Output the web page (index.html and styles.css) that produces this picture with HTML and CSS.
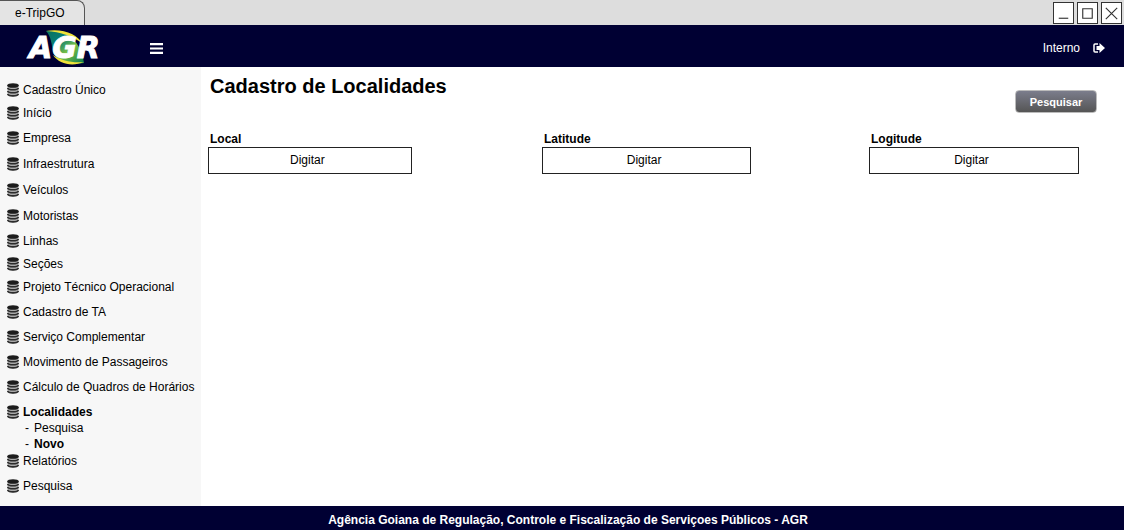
FILE: index.html
```html
<!DOCTYPE html>
<html lang="pt-BR">
<head>
<meta charset="utf-8">
<title>e-TripGO</title>
<link rel="stylesheet" href="styles.css">
</head>
<body>
<svg class="sprite" aria-hidden="true">
  <symbol id="db" viewBox="0 0 12 14">
    <path d="M.5 2.500v9c1 2.600 10 2.600 11 0v-9z" fill="#a8a8a8"/>
    <path d="M.5 5c1 2.300 10 2.300 11 0M.5 8c1 2.300 10 2.300 11 0M.5 11c1 2.600 10 2.600 11 0" fill="none" stroke="#2c2c2c" stroke-width="1.700"/>
    <ellipse cx="6" cy="2.500" rx="5.800" ry="2.300" fill="#1c1c1c"/>
  </symbol>
</svg>
<div class="window">
  <div class="titlebar">
    <div class="tab">e-TripGO</div>
    <div class="controls">
      <button class="control" aria-label="Minimizar"><svg viewBox="0 0 20 20"><path d="M5 15h10"/></svg></button>
      <button class="control" aria-label="Maximizar"><svg viewBox="0 0 20 20"><path d="M5 5h10v10H5z"/></svg></button>
      <button class="control" aria-label="Fechar"><svg viewBox="0 0 20 20"><path d="M4 4l12 12M16 4L4 16"/></svg></button>
    </div>
  </div>
  <header class="header">
    <svg class="logo" viewBox="0 0 76 38" role="img" aria-label="AGR">
      <defs>
        <linearGradient id="leaf" x1="0" y1="0" x2="1" y2="1">
          <stop offset="0" stop-color="#08705c"/><stop offset=".35" stop-color="#0a7f78"/><stop offset=".6" stop-color="#7cc242"/><stop offset="1" stop-color="#0a7a50"/>
        </linearGradient>
      </defs>
      <path d="M20 4C38 2 55 12 58 36C44 38 32 34 27 26C26 18 25 9 20 4z" fill="url(#leaf)"/>
      <path d="M20 4C37 1 51 7 57 17C47 9 35 5 20 4zM27 28C36 34 46 36 58 35C46 40 33 37 27 28z" fill="#efe23a"/>
      <text class="logo-text" x="3" y="31">AGR</text>
    </svg>
    <button class="menu" aria-label="Menu"><svg viewBox="0 0 12 10"><path d="M0 1h12M0 5h12M0 9h12"/></svg></button>
    <a class="user" href="#">Interno
      <svg viewBox="0 0 12 10" aria-hidden="true"><path d="M5 1H2Q1 1 1 2v6q0 1 1 1h3" fill="none" stroke="#fff" stroke-width="1.500"/><path d="M3.500 3H6.500V0L12 5L6.500 10V7H3.500z" fill="#fff"/></svg>
    </a>
  </header>
  <div class="body">
    <nav class="sidebar">
      <ul class="nav">
        <li><a href="#"><svg><use href="#db"/></svg>Cadastro Único</a></li>
        <li class="snug"><a href="#"><svg><use href="#db"/></svg>Início</a></li>
        <li><a href="#"><svg><use href="#db"/></svg>Empresa</a></li>
        <li class="loose"><a href="#"><svg><use href="#db"/></svg>Infraestrutura</a></li>
        <li class="loose"><a href="#"><svg><use href="#db"/></svg>Veículos</a></li>
        <li class="loose"><a href="#"><svg><use href="#db"/></svg>Motoristas</a></li>
        <li><a href="#"><svg><use href="#db"/></svg>Linhas</a></li>
        <li class="snug"><a href="#"><svg><use href="#db"/></svg>Seções</a></li>
        <li class="snug"><a href="#"><svg><use href="#db"/></svg>Projeto Técnico Operacional</a></li>
        <li><a href="#"><svg><use href="#db"/></svg>Cadastro de TA</a></li>
        <li><a href="#"><svg><use href="#db"/></svg>Serviço Complementar</a></li>
        <li><a href="#"><svg><use href="#db"/></svg>Movimento de Passageiros</a></li>
        <li><a href="#"><svg><use href="#db"/></svg>Cálculo de Quadros de Horários</a></li>
        <li><a class="current" href="#"><svg><use href="#db"/></svg>Localidades</a>
          <ul class="subnav">
            <li><a href="#">Pesquisa</a></li>
            <li><a class="current" href="#">Novo</a></li>
          </ul>
        </li>
        <li><a href="#"><svg><use href="#db"/></svg>Relatórios</a></li>
        <li><a href="#"><svg><use href="#db"/></svg>Pesquisa</a></li>
      </ul>
    </nav>
    <main class="main">
      <h1 class="title">Cadastro de Localidades</h1>
      <form class="form">
        <button class="search" type="button">Pesquisar</button>
        <div class="fields">
          <div class="field"><label for="local">Local</label><input id="local" type="text" placeholder="Digitar"></div>
          <div class="field"><label for="lat">Latitude</label><input id="lat" type="text" placeholder="Digitar"></div>
          <div class="field"><label for="lon">Logitude</label><input id="lon" type="text" placeholder="Digitar"></div>
        </div>
      </form>
    </main>
  </div>
  <footer class="footer">Agência Goiana de Regulação, Controle e Fiscalização de Serviçoes Públicos - AGR</footer>
</div>
</body>
</html>
```
FILE: styles.css
```css
* { box-sizing: border-box; }
body { margin: 0; font: 12px/16px "Liberation Sans", Arial, sans-serif; color: #000; background: #fff; }
a { color: inherit; text-decoration: none; }
ul { list-style: none; margin: 0; padding: 0; }
button, input { font: inherit; }
.sprite { position: absolute; width: 0; height: 0; }
.window { min-height: 100vh; display: flex; flex-direction: column; }
.titlebar { display: flex; justify-content: space-between; height: 25px; background: #ddd; }
.tab { width: 85px; padding: 4px 0 0 15px; background: #e4e4e4; border: solid #555; border-width: 1px 1px 0 0; border-radius: 0 8px 0 0; }
.controls { display: flex; gap: 3px; padding: 2px 2px 0 0; }
.control { width: 21px; height: 22px; padding: 0; background: #fff; border: 1px solid #333; }
.control svg { display: block; width: 100%; fill: none; stroke: #333; stroke-width: 1.2; }
.header { display: flex; align-items: center; height: 42px; padding: 0 19px 0 26px; background: #000033; color: #fff; }
.logo { width: 76px; height: 38px; }
.logo-text { font: italic bold 30px "DejaVu Sans", sans-serif; fill: #fff; stroke: #fff; stroke-width: 1; }
.menu { margin-left: 48px; padding: 0; background: none; border: 0; }
.menu svg { display: block; width: 13px; height: 11px; margin-top: 4px; stroke: #fff; stroke-width: 2; }
.user { display: flex; align-items: center; gap: 13px; margin-left: auto; padding-top: 4px; }
.user svg { width: 12px; height: 10px; }
.body { flex: 1; display: flex; }
.sidebar { width: 201px; padding-top: 10px; background: #f7f7f7; white-space: nowrap; }
.nav a { display: flex; align-items: center; gap: 4px; height: 25px; padding-left: 7px; }
.nav svg { width: 12px; height: 14px; flex: none; }
.nav .snug { margin-top: -2px; }
.nav .loose { margin-top: 1px; }
.nav .current { font-weight: bold; }
.nav .subnav { margin: -4px 0; }
.nav .subnav a { height: 16px; padding-left: 25px; gap: 5px; }
.subnav a::before { content: "-"; font-weight: normal; }
.main { flex: 1; padding: 7px 45px 0 7px; }
.title { margin: 0; padding-left: 2px; font-size: 20px; line-height: 24px; }
.form { display: flex; flex-direction: column; }
.search { align-self: flex-end; width: 82px; height: 23px; margin: -8px -18px 0 0; padding: 0; border: 1px solid #bbb; border-radius: 4px; background: linear-gradient(#7b7d8c, #555); color: #fff; font-size: 11px; font-weight: bold; }
.fields { display: grid; grid-template-columns: 334fr 327fr 210fr; margin-top: 18px; }
.field { display: flex; flex-direction: column; }
.field label { padding-left: 2px; font-weight: bold; }
.field input { width: 64%; height: 27px; padding: 0 5px 2px 0; border: 1px solid #222; background: #fff; text-align: center; }
.field:first-child input { width: 61%; }
.field:last-child input { width: 100%; }
.field input::placeholder { color: #000; opacity: 1; }
.footer { height: 24px; padding: 6px 0 0 12px; background: #000033; color: #fff; font-weight: bold; text-align: center; }
```
